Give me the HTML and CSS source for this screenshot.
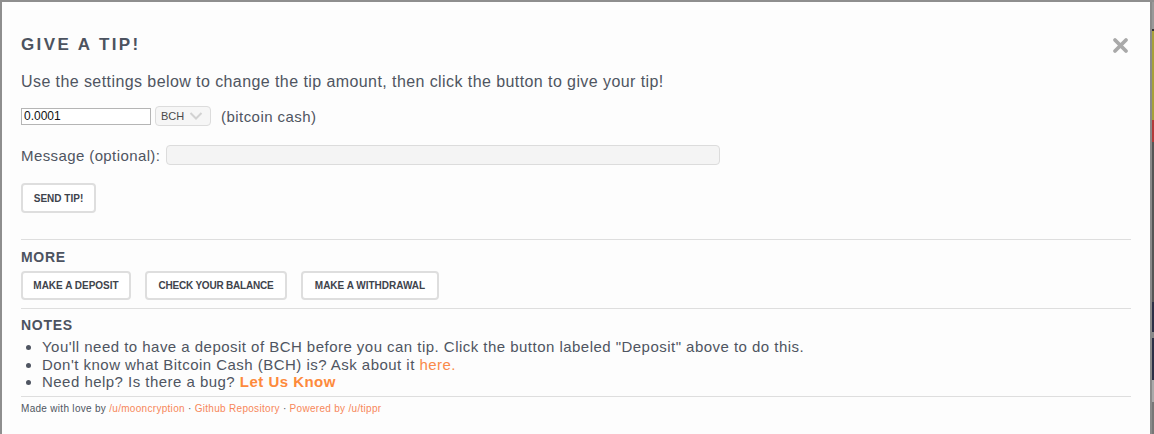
FILE: index.html
```html
<!DOCTYPE html>
<html>
<head>
<meta charset="utf-8">
<link rel="stylesheet" href="styles.css">
</head>
<body>
<div class="screen">
  <div class="modal">
    <header class="modal-head">
      <h1 class="title">GIVE A TIP!</h1>
      <button class="close" aria-label="Close">
        <svg width="17" height="17" viewBox="0 0 17 17"><path d="M3 3 L14 14 M14 3 L3 14" stroke="#a9a9a9" stroke-width="3.8" stroke-linecap="round"/></svg>
      </button>
    </header>
    <p class="intro">Use the settings below to change the tip amount, then click the button to give your tip!</p>
    <div class="amount-row">
      <input class="amount" type="text" value="0.0001">
      <div class="select">
        <span class="select-text">BCH</span>
        <svg class="chev" width="14" height="10" viewBox="0 0 14 10"><path d="M1.5 2 L7 7.5 L12.5 2" fill="none" stroke="#d2d2d2" stroke-width="2"/></svg>
      </div>
      <span class="unit">(bitcoin cash)</span>
    </div>
    <div class="msg-row">
      <label class="msg-label">Message (optional):</label>
      <input class="msg" type="text">
    </div>
    <button class="btn btn-send">SEND TIP!</button>
    <hr class="rule rule-first">
    <h2 class="section">MORE</h2>
    <div class="btn-row">
      <button class="btn btn-deposit">MAKE A DEPOSIT</button>
      <button class="btn btn-balance">CHECK YOUR BALANCE</button>
      <button class="btn btn-withdraw">MAKE A WITHDRAWAL</button>
    </div>
    <hr class="rule">
    <h2 class="section section-notes">NOTES</h2>
    <ul class="notes">
      <li>You'll need to have a deposit of BCH before you can tip. Click the button labeled "Deposit" above to do this.</li>
      <li>Don't know what Bitcoin Cash (BCH) is? Ask about it <a href="#" class="link">here.</a></li>
      <li>Need help? Is there a bug? <a href="#" class="link strong">Let Us Know</a></li>
    </ul>
    <hr class="rule rule-last">
    <footer class="foot">Made with love by <a href="#" class="flink">/u/mooncryption</a> · <a href="#" class="flink">Github Repository</a> · <a href="#" class="flink">Powered by /u/tippr</a></footer>
  </div>
  <div class="behind"></div>
</div>
</body>
</html>
```
FILE: styles.css
```css
* { box-sizing: border-box; }
html, body { margin: 0; padding: 0; }
body {
  width: 1154px;
  height: 434px;
  overflow: hidden;
  background: #8c8c8c;
  font-family: "Liberation Sans", Arial, sans-serif;
}
.screen {
  display: flex;
  height: 434px;
  border-top: 2px solid #8e8e8e;
}
.modal {
  width: 1152px;
  height: 432px;
  border-left: 2px solid #8e8e8e;
  border-right: 2px solid #8a8a8a;
  background: #fdfdfd;
  padding: 0 19px;
  color: #4f5561;
}
.behind {
  width: 2px;
  height: 432px;
  background: linear-gradient(#999 0 27px, #333 27px 29px, #a7a13a 29px 118px, #b33a3a 118px 140px, #555 140px 300px, #2c2f45 300px 330px, #888 330px 336px, #2c2f45 336px 378px, #aaa 378px 400px, #777 400px);
}
.modal-head {
  display: flex;
  justify-content: space-between;
  align-items: center;
  margin-top: 32px;
  height: 22px;
}
.title {
  margin: 0;
  font-size: 17px;
  line-height: 22px;
  font-weight: bold;
  letter-spacing: 2.4px;
  color: #4c5360;
}
.close {
  border: 0;
  background: none;
  padding: 0;
  margin-right: 2px;
  width: 17px;
  height: 17px;
  display: flex;
}
.intro {
  margin: 16px 0 0;
  font-size: 16px;
  line-height: 20px;
  letter-spacing: 0.42px;
}
.amount-row {
  display: flex;
  align-items: center;
  margin-top: 14px;
  height: 20px;
}
.amount {
  width: 130px;
  height: 17px;
  border: 1px solid #b5b5b5;
  padding: 0 2px;
  font-family: "Liberation Sans", Arial, sans-serif;
  font-size: 12px;
  color: #111;
  background: #fff;
}
.select {
  display: flex;
  align-items: center;
  margin-left: 4px;
  width: 56px;
  height: 20px;
  border: 1px solid #dcdcdc;
  border-radius: 4px;
  background: #f6f6f6;
  padding-left: 5px;
}
.select-text {
  font-size: 11px;
  color: #4a4a4a;
}
.chev {
  margin-left: 5px;
}
.unit {
  margin-left: 10px;
  font-size: 15px;
  letter-spacing: 0.45px;
}
.msg-row {
  display: flex;
  align-items: center;
  margin-top: 19px;
  height: 20px;
}
.msg-label {
  font-size: 15px;
  letter-spacing: 0.4px;
}
.msg {
  margin-left: 6px;
  width: 554px;
  height: 20px;
  border: 1px solid #dcdcdc;
  border-radius: 4px;
  background: #f4f4f4;
}
.btn {
  display: block;
  height: 29px;
  padding: 0;
  text-align: center;
  border: 2px solid #dedede;
  border-radius: 4px;
  background: #fff;
  font-family: "Liberation Sans", Arial, sans-serif;
  font-size: 10px;
  font-weight: bold;
  color: #3e434c;
  white-space: nowrap;
}
.btn-send {
  margin-top: 18px;
  height: 30px;
  width: 75px;
}
.btn-deposit { width: 110px; }
.btn-balance { width: 142px; letter-spacing: -0.2px; }
.btn-withdraw { width: 138px; }
.rule {
  border: 0;
  border-top: 1px solid #dedede;
  margin: 0;
}
.rule-first { margin-top: 26px; }
.section {
  margin: 9px 0 0;
  font-size: 14px;
  line-height: 16px;
  font-weight: bold;
  letter-spacing: 0.7px;
  color: #4c5360;
}
.section-notes { margin-top: 8px; }
.btn-row {
  display: flex;
  gap: 14px;
  margin-top: 6px;
  margin-bottom: 8px;
}
.notes {
  margin: 5px 0 0;
  padding-left: 21px;
  font-size: 15px;
  line-height: 17.5px;
  letter-spacing: 0.47px;
}
.link {
  color: #f98a4a;
  text-decoration: none;
}
.link.strong {
  font-weight: bold;
  color: #fd8a3c;
}
.rule-last { margin-top: 5px; }
.foot {
  margin-top: 5px;
  font-size: 10px;
  line-height: 14px;
  letter-spacing: 0.3px;
  color: #4f5561;
}
.flink {
  color: #f7875a;
  text-decoration: none;
}
```
